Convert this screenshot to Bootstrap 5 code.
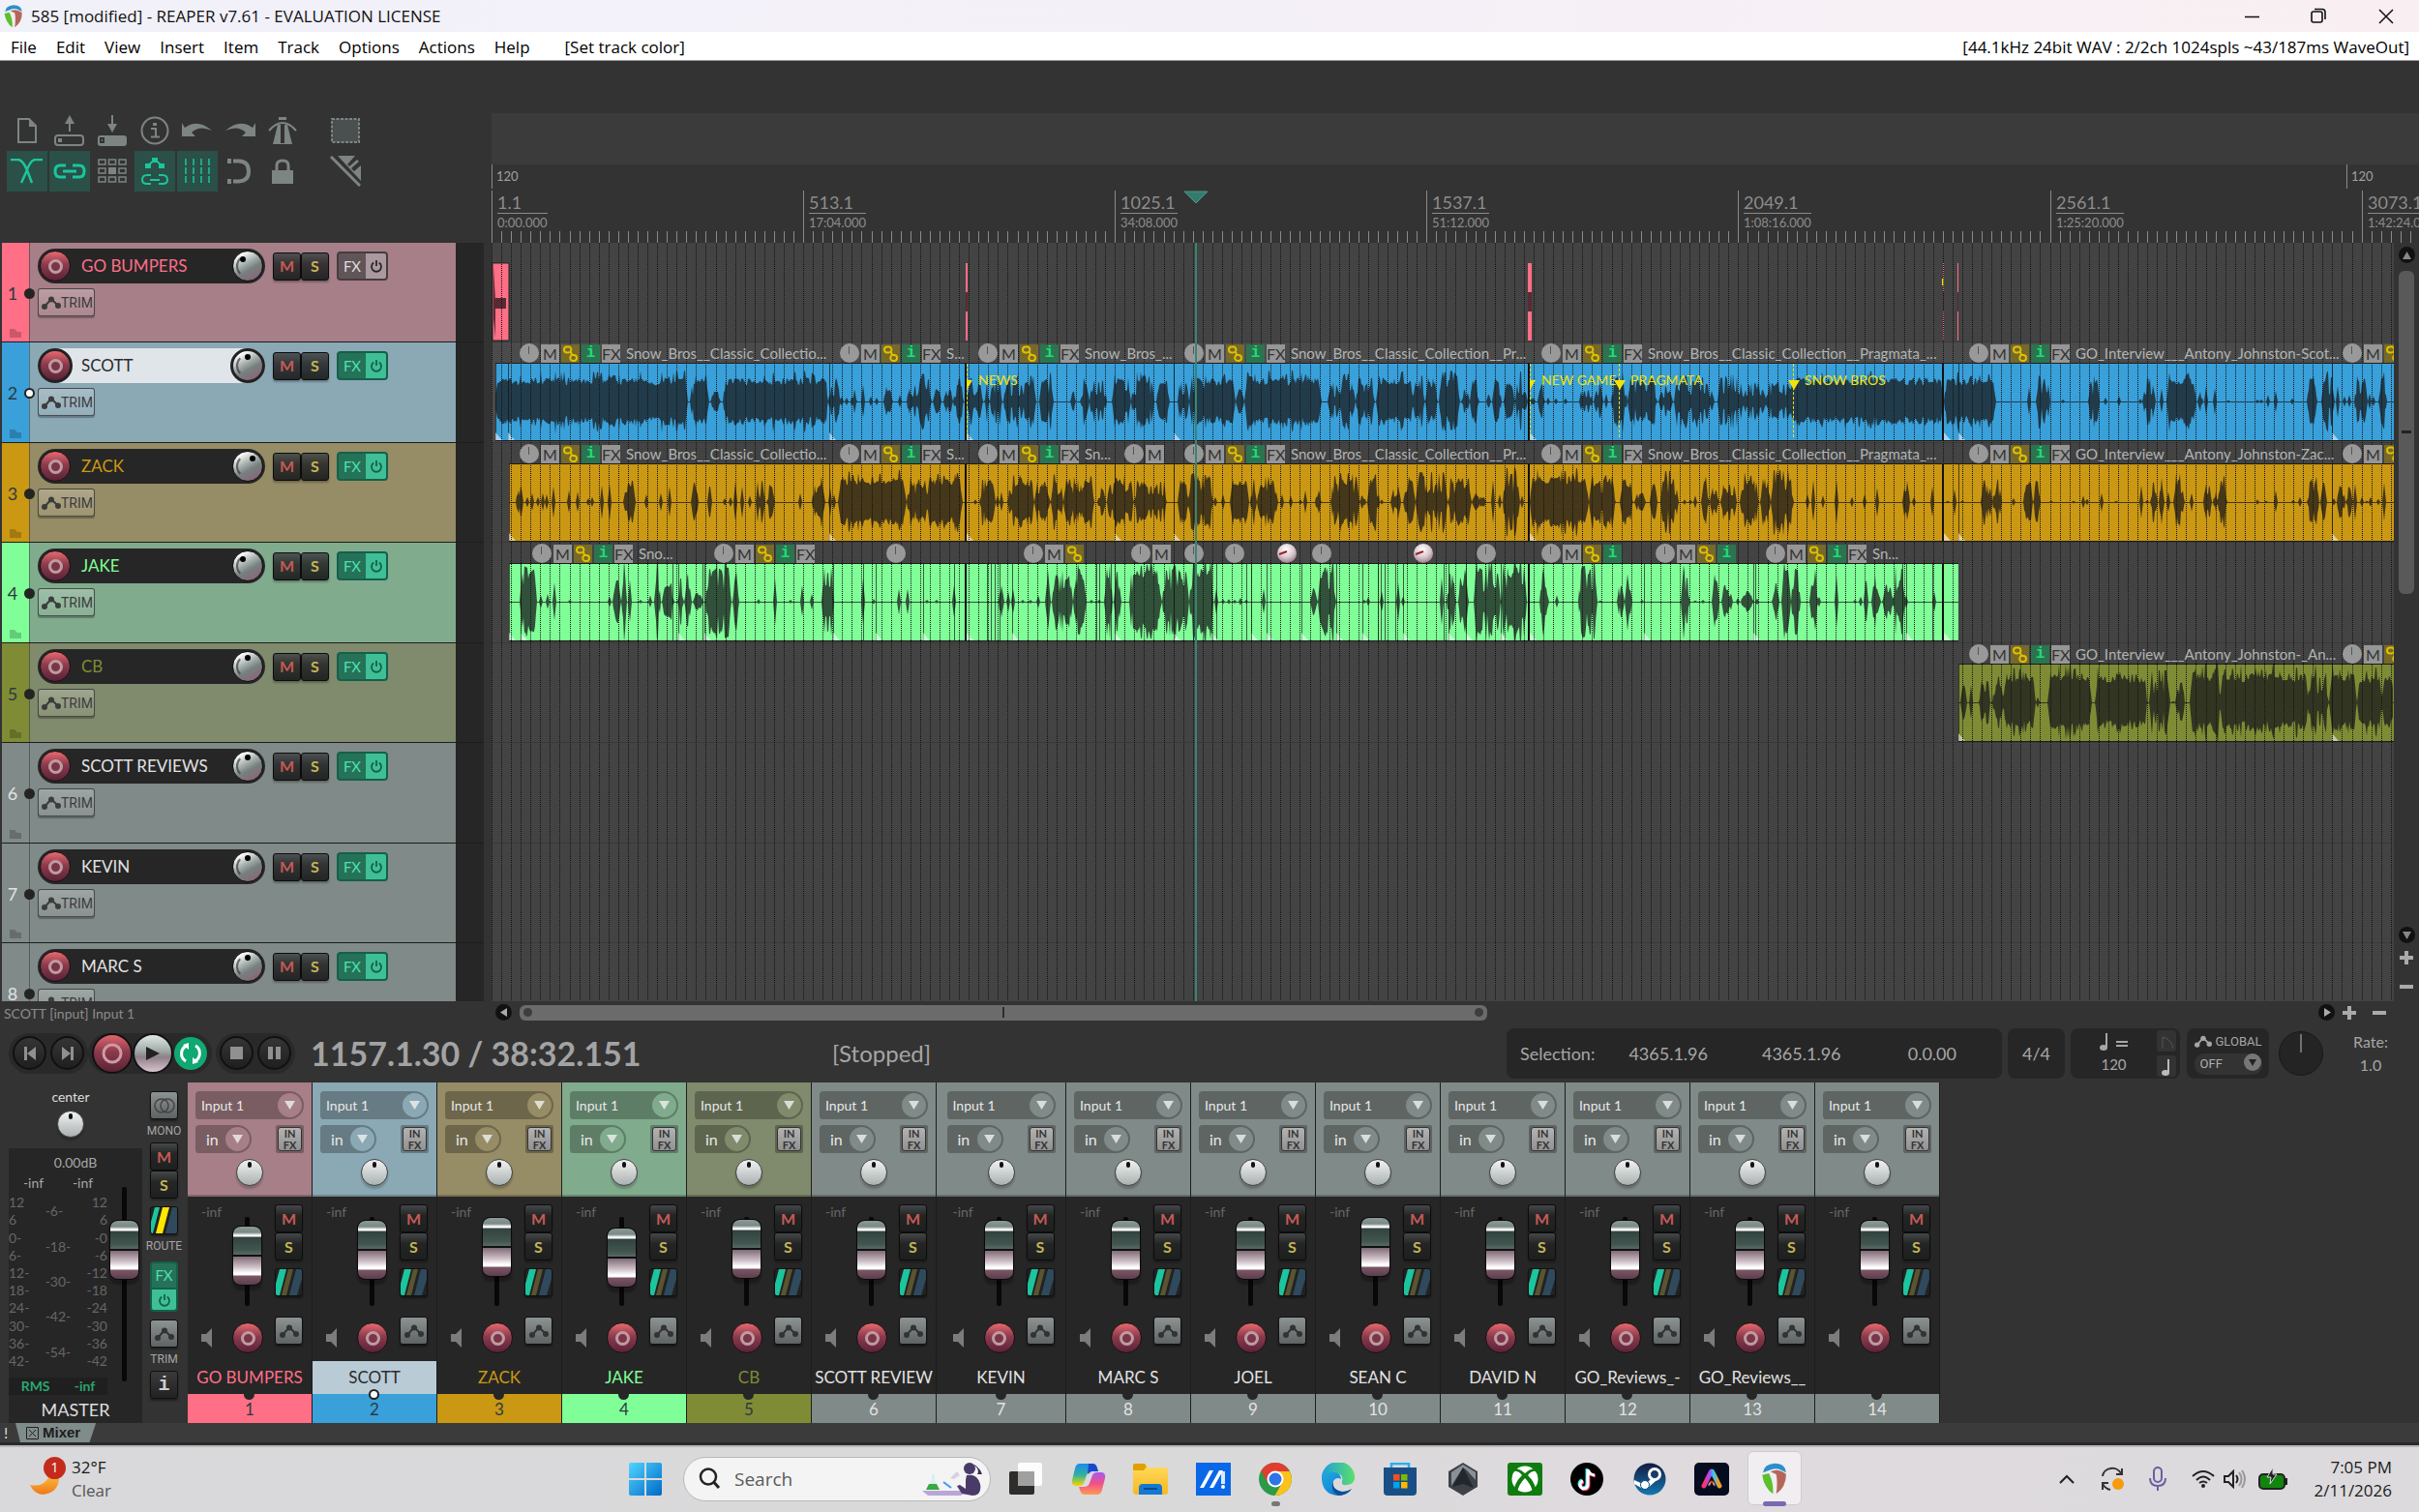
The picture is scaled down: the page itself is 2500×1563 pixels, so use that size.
<!DOCTYPE html>
<html lang="en">
<head>
<meta charset="utf-8">
<meta name="viewport" content="width=device-width, initial-scale=1">
<title>585 [modified] - REAPER v7.61 - EVALUATION LICENSE</title>
<link rel="stylesheet" href="https://cdn.jsdelivr.net/npm/bootstrap@5.3.0/dist/css/bootstrap.min.css">
<style>
:root{--ui:"Open Sans","Noto Sans",sans-serif;--daw:Lato,"Open Sans",sans-serif;--narrow:"Liberation Sans Narrow",Roboto,sans-serif}
html,body{height:100%}
body{background:#333;color:#a6a6a6;font-family:var(--daw);font-size:16px;line-height:20px;overflow:hidden}
svg{display:block;flex:none}
a{color:inherit;text-decoration:none}
.btn{--bs-btn-padding-x:0;--bs-btn-padding-y:0;--bs-btn-border-radius:3px;line-height:1;flex:none}

/* window frame */
.titlebar{height:33px;background:linear-gradient(90deg,#f1f1f9,#f4f0f8 50%,#f9eff2);color:#111;font:17px/34px var(--ui)}
.titlebar svg{color:#111}
.winbtn{width:69px;height:33px}
.menubar{height:30px;background:#fff;border-bottom:1px solid #999;color:#000;font:17px/31px var(--ui);padding-left:1px}
.menubar a{padding:0 10px}

/* tool bar and ruler */
.head{height:188px}
.tcpw{width:508px;flex:none}
.tools{padding:51px 0 0 7px}
.toolrow{gap:2px}
.tool{width:42px;height:42px;color:#7d8583;border-radius:0;display:flex;align-items:center;justify-content:center}
.tool.on{background:#2a5048;color:#1cc59d}
.tool.far{margin-left:21px}
.tool:hover{color:#a0a8a6}
.shade{height:53px;margin-top:54px;background:#3b3b3b}
.tempo{height:27px}
.timeruler{height:54px}
.rmark{position:absolute;top:0;height:100%;border-left:1px solid #8a8a8a;padding-left:5px;white-space:nowrap;color:#8c8c8c}
.rmark b{display:block;font:18px/21px var(--daw);border-bottom:1px solid #8a8a8a;margin-top:2px}
.rmark i{display:block;font:normal 13px/18px var(--daw)}
.tmark{position:absolute;top:0;height:25px;border-left:1px solid #8a8a8a;padding-left:4px;font-size:13px;line-height:25px;color:#a0a0a0}

/* track control panel */
.work{flex:1 1 0;min-height:0;overflow:hidden}
.tcp{padding-left:2px;padding-right:8px}
.trk{height:103px;background:#262626;border-bottom:1px solid #1d1d1d}
.trk:nth-child(even),.lane:nth-child(even){height:104px}
.tnum{width:28px;background:var(--c);color:#2c3a40;font-size:18px;position:relative;flex:none}
.tnum span{position:absolute;left:0;width:22px;text-align:center;top:42px}
.tnum svg{position:absolute;left:8px;bottom:4px;opacity:.2}
.tdot{position:absolute;left:23px;top:47px;width:11px;height:11px;border-radius:50%;background:#242424;z-index:1}
.sel .tdot{background:#fff;border:2px solid #222}
.tbody2{background:var(--p);border-left:1px solid #0005;width:441px;padding:6px 0 0 8px;flex:none}
.pill{width:235px;height:36px;border-radius:18px;background:#262626;padding:2px;color:var(--n)}
.sel .pill{background:#dfe5e9;padding:0;color:#2b2b30}
.sel .pill>.arm,.sel .pill>.pan{width:36px;height:36px;border:3px solid #222}
.tname{font-size:17px;flex:1;padding-left:11px;white-space:nowrap;overflow:hidden}
.sel .tname{padding-left:9px}
.arm{width:32px;height:32px;border-radius:50%;background:linear-gradient(#e8696f,#8b3b4c 45%,#5a2338);border:1px solid #1d1014;display:flex;align-items:center;justify-content:center;padding:0;flex:none}
.arm::after{content:"";width:15px;height:15px;border-radius:50%;border:3px solid #c09aa2;background:#7a3547}
.pan{width:32px;height:32px;border-radius:50%;border:1px solid #111;background:linear-gradient(150deg,#fff 15%,#aab5b2 40%,#75807f 60%,#8c6478 90%);position:relative;padding:0;flex:none}
.pan::before{content:"";position:absolute;inset:3px;border-radius:50%;border:2px solid transparent;border-left-color:#333a}
.pan::after{content:"";position:absolute;width:6px;height:6px;border-radius:50%;background:#000;top:3px;left:12px}
.pan.l::after{left:7px;top:5px}.pan.r::after{left:17px;top:4px}
.ms{width:29px;height:29px;background:linear-gradient(#4b4f50cc,#222a 40%,#1c1e1edd),#2a2c2c88;border:1px solid #0c0c0c;border-radius:3px;font:bold 16px/1 var(--daw);color:#c55a56;box-shadow:0 2px 2px #0004}
.ms.s{color:#c4b456}
.fxb{width:30px;height:30px;border:2px solid #14604a;border-right:0;border-radius:4px 0 0 4px;background:#257258;color:#4fe0b0;font:15px/1 var(--daw)}
.pwr{width:23px;height:30px;border:2px solid #14604a;border-left:0;border-radius:0 4px 4px 0;background:#3fbf96;color:#14604a;display:flex;align-items:center;justify-content:center}
.off .fxb{background:#625558;border-color:#473c3f;color:#ddd}
.off .pwr{background:#aa999e;border-color:#473c3f;color:#2c2527}
.trim{width:59px;height:29px;margin-top:5px;border:1px solid #333c;background:linear-gradient(#ffffff3d,#ffffff12),var(--p);color:#3c3c3c;font:14px/1 var(--narrow);display:flex;align-items:center;padding-left:3px;box-shadow:0 2px 1px #0004}

/* arrange view */
.lane{height:103px;position:relative;background:#434343;border-bottom:1px solid #3a3a3a}
.lane.sel{background:#4b4b4b}
.lane svg.wave{position:absolute;left:0;top:0}
.gridlines{position:absolute;left:0;top:0;pointer-events:none}
.clip{position:absolute;top:1px;height:20px;display:flex;gap:2px;align-items:flex-end;white-space:nowrap;z-index:2;color:#b0b4b4}
.clip i{width:19px;height:19px;flex:none;font:normal 16px/19px var(--daw);text-align:center;background:#969696;color:#333}
.clip i.k{width:20px;height:20px;border-radius:50%;background:linear-gradient(90deg,transparent 9px,#555 9px,#555 10px,transparent 10px) 0 3px/20px 8px no-repeat,#999}
.clip i.k2{border-radius:50%;width:20px;height:20px;background:radial-gradient(circle at 45% 30%,#fff,#d9c9cf 45%,#7a5060)}
.clip i.g{background:#76692a;color:#e0c000}
.clip i.i{background:#2c7450;color:#1fdc77;font:bold 16px/19px "Liberation Mono",monospace}
.clip span{font-size:15px;line-height:20px;padding-left:4px}
.flag{position:absolute;top:22px;height:79px;z-index:2;color:#f2e20a;font-size:14px;line-height:34px;padding-left:12px;white-space:nowrap}
.flag::before{content:"";position:absolute;left:0;top:0;height:76px;border-left:1px dashed #f2e20a}
.flag::after{content:"";position:absolute;left:-5px;top:17px;border:6px solid transparent;border-top:10px solid #f2e20a;border-bottom:0}
.flag.h::after{left:0;border-left-width:0}
.playhead{position:absolute;top:-54px;bottom:0;left:727px;width:2px;background:#3a8474;z-index:3}
.playhead svg{margin-left:-12px}
.vs{width:26px;flex:none}
.vthumb{width:16px;height:334px;border-radius:6px;background:#595959}
.vthumb::after{content:"";display:block;width:10px;height:3px;background:#222;margin:165px auto 0}
.rnd{width:17px;height:17px;border-radius:50%;background:#111;color:#888;display:flex;align-items:center;justify-content:center}
.status{height:27px;color:#8c8c8c;font-size:14px;line-height:26px}
.hend{margin-right:33px}
.hthumb{width:1000px;height:16px;border-radius:6px;background:#6b6b6b}
.hthumb b{width:9px;height:9px;border-radius:50%;background:#3d3d3d}
.hthumb u{width:2px;height:11px;background:#2c2c2c}

/* transport */
.transport{height:57px;padding:0 0 4px 9px}
.tgroup{background:#292929;border-radius:22px;height:42px;padding:0 4px;gap:4px}
.tbtn{width:35px;height:35px;border-radius:50%;background:linear-gradient(#353535,#1f1f1f);border:2px solid #111;color:#909090;display:flex;align-items:center;justify-content:center;padding:0}
.tbtn.rec{width:42px;height:42px;background:linear-gradient(#e0656c,#8b3b4c 45%,#5a2338);color:#cf9aa2}
.tbtn.play{width:42px;height:42px;background:linear-gradient(#dfe8e4,#a5b0ac 40%,#8c8088 60%,#d9c4ce);color:#222}
.tbtn.loop{width:34px;height:34px;background:#10a873;color:#fff;border:0;margin:0 1px}
.bigtime{font-weight:700;font-size:34px;line-height:42px;color:#a3a3a3;margin-left:16px;width:539px}
.tbox{background:#262626;border-radius:8px;height:52px;font-size:18px}
.selbox{width:512px;padding:0 47px 0 14px}
.selbox span+span{margin-left:35px}
.selbox span+span+span{margin-left:56px}
.selbox span:last-child{margin-left:auto}
.sigbox{margin-left:6px;width:59px}
.bpmbox{margin-left:6px;width:113px}
.bpmbox p{font-size:15px;line-height:26px;margin:0}
.tiny{background:#333;width:20px;height:22px}
.autobox{margin-left:7px;width:85px}
.autobox div{font:13px/20px var(--narrow)}
.globalsel{appearance:none;background:#333;border:0;border-radius:10px;height:22px;width:70px;color:#b0b0b0;font:13px/20px var(--narrow);padding:0 6px}
.ratedial{margin-left:10px;width:46px;height:46px;background:#242424;border:1px solid #191919}
.ratetext{margin:0 30px 0 29px;line-height:24px;width:40px;font-size:16px}

/* mixer */
.mixer{height:352px}
.master{width:194px;flex:none}
.mcenter{left:0;width:146px;top:5px;color:#ddd;font-size:14px}
.meter{width:138px;background:#262626;margin:68px 0 0 9px}
.mdb{font-size:14px;line-height:29px}
.mcol{width:102px}
.mscale{height:182px}
.mrms{color:#2aa56f;background:#1f1f1f;font-size:14px;font-weight:bold;line-height:18px}
.mname{color:#ddd;font-size:18px;line-height:30px;width:138px;text-align:center}
.sc{font-size:14px;color:#666;line-height:18px}
.sc span{flex:1;display:flex;align-items:center}
.side{width:29px;margin-left:8px;padding-top:9px;color:#a6a6a6}
.slabel{font:12px/20px var(--narrow);display:block;text-align:center;margin:2px -6px}
.fxv{width:29px;height:29px;background:#257258;border:2px solid #14604a;color:#4fe0b0;font-size:15px;border-radius:4px 4px 0 0}
.pwv{width:29px;height:23px;background:#3fbf96;border:2px solid #14604a;border-top:0;color:#14604a;border-radius:0 0 4px 4px}
.knob{width:28px;height:28px;border-radius:50%;border:1px solid #444;background:linear-gradient(#ffffffe6,#ffffff55),#7e8a88;position:relative;padding:0;box-shadow:0 3px 2px #0003;flex:none}
.knob::after{content:"";position:absolute;left:11px;top:2px;width:4px;height:6px;border-radius:2px;background:#111}
.strip{width:129px;flex:none;border-right:1px solid #0b0b0b88}
.strip.wide{width:134px}
.sin{width:128px;margin:0 auto}
.stop{height:118px;background:var(--p);padding-top:9px;border-bottom:2px solid #0003}
.pick{position:relative;height:29px;background:#0004;border-radius:4px 15px 15px 4px}
.pick select{appearance:none;width:100%;height:29px;border:0;background:none;color:#e8e8e8;font:14px/29px var(--daw);padding:0 6px}
.pick.mon{width:58px}
.pick.mon select{padding-left:11px;font-size:16px}
.pick svg{position:absolute;right:2px;top:2px;pointer-events:none}
.monrow{height:29px;margin-top:6px}
.panrow{margin-top:6px;line-height:28px}
.infx{width:29px;height:29px;background:#0004;padding:2px;border:0;border-radius:2px}
.infx b{display:block;border:1px solid #333;border-radius:3px;background:linear-gradient(#ffffff66,#ffffff22),#808080;height:25px;font:bold 11px/12px var(--daw);color:#333}
.slow{height:170px;background:#262626}
.cola{width:46px;padding:7px 0 0 14px}
.cola svg{margin-top:111px}
.colb{padding-top:21px}
.colb .arm{margin-top:17px}
.colc{padding:8px 0 0 12px}
.colc .rt{margin-bottom:21px}
.fader{position:relative;width:31px;height:92px}
.fader.long{height:201px;margin:11px 0 0 2px}
.fader::before{content:"";position:absolute;left:13px;top:0;bottom:0;width:5px;background:#080808;border-radius:2px}
.cap{position:relative;width:31px;height:62px;border:1px solid #0a0a0a;border-radius:9px/8px;box-shadow:0 5px 2px #0004;background:linear-gradient(#8d9a97 0,#7a8986 6px,#fff 9px,#fff 10px,#33433f 11px,#41554f 24px,#5a6965 29px,#111 29px,#111 31px,#7f6b76 31px,#cfc0c8 42px,#fff 48px,#fff 50px,#7c5566 51px,#5a3f4c 60px)}
.fader input{position:absolute;inset:0;width:100%;height:100%;opacity:0;margin:0}
.sq{width:29px;height:29px;border:1px solid #111;border-radius:3px;background:linear-gradient(#8d9292,#5e6363);color:#333;display:flex;align-items:center;justify-content:center;box-shadow:0 2px 2px #0006}
.sq.dark{background:linear-gradient(#3a3a3a,#222);color:#ccc;font:bold 20px/1 "Liberation Mono",monospace}
.rt{overflow:hidden;background:#222}
.nm{height:34px;line-height:34px;background:#262626;color:var(--n);font-size:17px;text-align:center;white-space:nowrap;overflow:hidden;padding:0 2px}
.sel .nm{background:#b9cbd5;color:#2b2b30}
.no{height:30px;line-height:32px;background:var(--c);color:#2c3a40;font-size:17px;text-align:center;position:relative}
.no::before{content:"";position:absolute;left:50%;top:-5px;width:11px;height:11px;margin-left:-6px;border-radius:50%;background:#262626}
.sel .no::before{background:#fff;border:2px solid #222}
.gray .no,.gray .tnum{color:#e2e2e2}
.tabs2{height:23px;background:#3b3b3b;border-bottom:3px solid #2a2a2a}
.tabs2 b{width:16px;color:#ddd;padding-left:4px;font-weight:400}
.mtab{background:#7f8c8a;color:#1c1c1c;font:bold 15px/20px "Liberation Sans",sans-serif;padding:0 16px 0 11px;clip-path:polygon(0 0,100% 0,92% 100%,6% 100%)}

/* task bar */
.taskbar{height:69px;padding-bottom:2px;border-top:2px solid #b9b9b9;background:linear-gradient(90deg,#d9d9db,#dad9da 50%,#dfdade 70%,#dcdadd);color:#1a1a1a;font:17px/24px var(--ui)}
.weather{width:650px;padding-left:30px}
.wicon{width:44px;font-size:14px}
.wsub{color:#555}
.tapps{width:838px}
.tapps a{flex:1;display:flex;justify-content:center;align-items:center;height:65px;position:relative}
.tapps a.act::before{content:"";position:absolute;left:4px;right:4px;top:4px;height:56px;border-radius:6px;background:#f1eef2;border:1px solid #cfcbd0}
.tapps a.act svg{position:relative}
.tapps a.run::after,.tapps a.act::after{content:"";position:absolute;bottom:4px;width:9px;height:5px;border-radius:3px;background:#777}
.tapps a.act::after{width:24px;background:#7b68b5}
.srch{width:318px;height:46px;border-radius:23px;background:#f4f4f4;border:1px solid #b8b8b8;padding:0 6px 0 15px;margin-left:22px}
.srch input{border:0;background:none;outline:0;width:180px;font:19px/30px var(--ui);color:#555;padding:0 0 0 14px}
.srch input::placeholder{color:#5a5a5a}
.wbadge{position:absolute;left:15px;top:-3px;width:23px;height:23px;border-radius:50%;background:#c42b1c;color:#fff;font-size:14px;line-height:22px;text-align:center}
.tray{padding-right:28px;gap:25px}
</style>
</head>
<body class="d-flex flex-column">

<svg width="0" height="0" class="position-absolute" aria-hidden="true">
 <defs>
  <linearGradient id="gw" x2="1" y2="1"><stop stop-color="#50d5ff"/><stop offset="1" stop-color="#0068c8"/></linearGradient>
  <linearGradient id="gf" y2="1" x2="0"><stop stop-color="#ffdc60"/><stop offset="1" stop-color="#f8b820"/></linearGradient>
  <linearGradient id="ge" x2="1" y2="1"><stop stop-color="#1fa8e0"/><stop offset=".5" stop-color="#1590d8"/><stop offset="1" stop-color="#0c59a4"/></linearGradient>
  <linearGradient id="ge2" x2="1"><stop stop-color="#1c9de0"/><stop offset="1" stop-color="#5be06a"/></linearGradient>
  <linearGradient id="gc1" x2="0" y2="1"><stop stop-color="#1a8cf0"/><stop offset=".5" stop-color="#30b0a0"/><stop offset="1" stop-color="#f5d800"/></linearGradient>
  <linearGradient id="gc2" x2="0" y2="1"><stop stop-color="#a85af0"/><stop offset=".5" stop-color="#f0508a"/><stop offset="1" stop-color="#ff9a50"/></linearGradient>
  <linearGradient id="ga" x2="1" y2="0"><stop stop-color="#ff3070"/><stop offset=".4" stop-color="#a050ff"/><stop offset=".6" stop-color="#30c8f0"/><stop offset="1" stop-color="#ff9a20"/></linearGradient>
  <linearGradient id="ga2" x2="0" y2="1"><stop stop-color="#ff2020"/><stop offset=".5" stop-color="#f0c020"/><stop offset="1" stop-color="#7048ff"/></linearGradient>
  <linearGradient id="gs" x2="0" y2="1"><stop stop-color="#141a40"/><stop offset="1" stop-color="#1478b0"/></linearGradient>
  <linearGradient id="gm" x2="0" y2="1"><stop stop-color="#f8c040"/><stop offset="1" stop-color="#f07818"/></linearGradient>
  <symbol id="reaper" viewBox="0 0 32 40"><path d="M1 16Q-1 4 8 2 16-1 24 2 33 5 31 16 28 32 16 39 4 32 1 16z" fill="#eee"/><path d="M2 12Q3 2 16 1 29 1 30 12L26 10Q18 5 10 9z" fill="#2a90cc"/><path d="M1 15L9 13Q15 24 14 38 3 30 1 15z" fill="#5cbf2c"/><path d="M11 11Q20 6 30 14 30 30 18 38 20 24 18 14z" fill="#b5665a"/></symbol>
  <symbol id="pw" viewBox="0 0 14 14"><path d="M4.2 3.6A5 5 0 1 0 9.8 3.6M7 1V7" fill="none" stroke="currentColor" stroke-width="1.8"/></symbol>
  <symbol id="env" viewBox="0 0 20 14"><path d="M3 11L10 3 17 10" fill="none" stroke="currentColor" stroke-width="2"/><circle cx="3" cy="11" r="3" fill="currentColor"/><circle cx="10" cy="3.5" r="3" fill="currentColor"/><circle cx="17" cy="10" r="3" fill="currentColor"/></symbol>
  <symbol id="fold" viewBox="0 0 12 9"><path d="M0 0H5L8 3H12V9H0z"/></symbol>
  <symbol id="spk" viewBox="0 0 12 20"><path d="M0 6H5L11 0V20L5 14H0z" fill="#7c7c7c"/></symbol>
  <symbol id="dd" viewBox="0 0 25 25"><circle cx="12.500" cy="12.500" r="12.500" fill="var(--p)"/><path d="M7 8H18L12.500 17z" fill="#f0f0f0cc"/></symbol>
  <symbol id="chain" viewBox="0 0 19 19"><path d="M8 8.500H6A3 3 0 0 1 6 2.500H8A3 3 0 0 1 9 8Q12 9 10 12M11 11H13A3 3 0 0 1 13 17H12A3 3 0 0 1 10 12" fill="none" stroke="currentColor" stroke-width="2"/></symbol>
 </defs>
</svg>

<header class="titlebar d-flex align-items-center">
 <svg width="24" height="26" class="ms-0 ps-1"><use href="#reaper"/></svg>
 <span class="ps-2 flex-grow-1">585 [modified] - REAPER v7.61 - EVALUATION LICENSE</span>
 <button class="btn winbtn rounded-0" aria-label="Minimize"><svg class="mx-auto" width="16" height="16"><path d="M0 8.500H15" stroke="currentColor" stroke-width="1.500"/></svg></button>
 <button class="btn winbtn rounded-0" aria-label="Restore"><svg class="mx-auto" width="17" height="17" fill="none" stroke="currentColor" stroke-width="1.600"><rect x="1" y="4" width="11" height="11" rx="2"/><path d="M4 1.500H12Q15 1.500 15 4.500V12"/></svg></button>
 <button class="btn winbtn rounded-0" aria-label="Close"><svg class="mx-auto" width="16" height="16"><path d="M1 1L15 15M15 1L1 15" stroke="currentColor" stroke-width="1.500"/></svg></button>
</header>

<nav class="menubar d-flex" aria-label="Main menu">
 <a href="#">File</a><a href="#">Edit</a><a href="#">View</a><a href="#">Insert</a><a href="#">Item</a><a href="#">Track</a><a href="#">Options</a><a href="#">Actions</a><a href="#">Help</a><a href="#" class="ms-3">[Set track color]</a>
 <a href="#" class="ms-auto">[44.1kHz 24bit WAV : 2/2ch 1024spls ~43/187ms WaveOut]</a>
</nav>

<section class="head d-flex flex-shrink-0">
 <div class="tcpw tools">
  <div class="d-flex toolrow" id="tools1"></div>
  <div class="d-flex toolrow" id="tools2"></div>
 </div>
 <div class="flex-grow-1">
  <div class="shade"></div>
  <div class="tempo position-relative overflow-hidden" id="tempo"></div>
  <div class="timeruler position-relative overflow-hidden" id="ruler"></div>
 </div>
</section>

<main class="work d-flex">
 <div class="tcp tcpw" id="tcp"></div>
 <div class="flex-grow-1 position-relative">
  <div class="overflow-hidden h-100 position-relative" id="lanes"></div>
  <div class="playhead"></div>
 </div>
 <div class="vs d-flex flex-column align-items-center">
  <button class="btn rnd mt-1 rounded-circle" aria-label="Scroll up"><svg width="9" height="8"><path d="M0 8L4.500 0 9 8z" fill="currentColor"/></svg></button>
  <div class="vthumb mt-2"></div>
  <button class="btn rnd mt-auto rounded-circle" aria-label="Scroll down"><svg width="9" height="8"><path d="M0 0L4.500 8 9 0z" fill="currentColor"/></svg></button>
  <button class="btn mt-2 border-0" aria-label="Zoom in vertically"><svg width="14" height="14"><path d="M5 0H9V5H14V9H9V14H5V9H0V5H5z" fill="#aaa"/></svg></button>
  <button class="btn mt-3 mb-2 border-0" aria-label="Zoom out vertically"><svg width="14" height="14"><path d="M0 5H14V9H0z" fill="#aaa"/></svg></button>
 </div>
</main>

<div class="status d-flex flex-shrink-0">
 <div class="tcpw ps-1">SCOTT [input] Input 1</div>
 <div class="d-flex align-items-center flex-grow-1 pb-1 ps-1">
  <button class="btn rnd rounded-circle" aria-label="Scroll left"><svg width="8" height="9"><path d="M7 0L0 4.500 7 9z" fill="#aaa"/></svg></button>
  <div class="hthumb ms-2 d-flex justify-content-between align-items-center px-1"><b></b><u></u><b></b></div>
  <button class="btn rnd rounded-circle ms-auto" aria-label="Scroll right"><svg width="8" height="9"><path d="M1 0L8 4.500 1 9z" fill="#aaa"/></svg></button>
  <button class="btn border-0 ms-2" aria-label="Zoom in"><svg width="15" height="14"><path d="M5 0H9V5H14V9H9V14H5V9H0V5H5z" fill="#aaa"/></svg></button>
  <button class="btn border-0 ms-3 hend" aria-label="Zoom out"><svg width="15" height="14"><path d="M0 5H14V9H0z" fill="#aaa"/></svg></button>
 </div>
</div>

<section class="transport d-flex align-items-center flex-shrink-0">
 <div class="tgroup d-flex align-items-center">
  <button class="btn tbtn" aria-label="Go to start"><svg width="14" height="14" fill="currentColor"><path d="M1 0H4V14H1zM13 0V14L4 7z"/></svg></button>
  <button class="btn tbtn" aria-label="Go to end"><svg width="14" height="14" fill="currentColor"><path d="M10 0H13V14H10zM1 0V14L10 7z"/></svg></button>
 </div>
 <div class="tgroup d-flex align-items-center px-1 gap-0">
  <button class="btn tbtn rec" aria-label="Record"><svg width="22" height="22"><circle cx="11" cy="11" r="9" fill="none" stroke="currentColor" stroke-width="3"/></svg></button>
  <button class="btn tbtn play" aria-label="Play"><svg width="16" height="16"><path d="M1 1L15 8 1 15z" fill="currentColor"/></svg></button>
  <button class="btn tbtn loop" aria-label="Repeat"><svg width="24" height="24" fill="none" stroke="currentColor" stroke-width="3"><path d="M8 4A9 9 0 0 0 7 20M16 20A9 9 0 0 0 17 4"/><path d="M10 1V8L4 3zM14 23V16L20 21z" fill="currentColor" stroke="none"/></svg></button>
 </div>
 <div class="tgroup d-flex align-items-center ms-1">
  <button class="btn tbtn" aria-label="Stop"><svg width="13" height="13"><path d="M0 0H13V13H0z" fill="currentColor"/></svg></button>
  <button class="btn tbtn" aria-label="Pause"><svg width="13" height="13"><path d="M0 0H5V13H0zM8 0H13V13H8z" fill="currentColor"/></svg></button>
 </div>
 <div class="bigtime">1157.1.30 / 38:32.151</div>
 <div class="flex-grow-1 fs-4">[Stopped]</div>
 <div class="tbox selbox d-flex align-items-center"><span>Selection:</span><span>4365.1.96</span><span>4365.1.96</span><span>0.0.00</span></div>
 <div class="tbox sigbox d-flex align-items-center justify-content-center">4/4</div>
 <div class="tbox bpmbox d-flex">
  <div class="flex-grow-1 text-center pt-1"><svg class="mx-auto" width="32" height="20" fill="#a6a6a6"><ellipse cx="5" cy="16" rx="4" ry="3"/><path d="M7 1H9V16H7zM18 9H30V11H18zM18 13H30V15H18z"/></svg><p>120</p></div>
  <div class="d-flex flex-column gap-1 justify-content-center me-1"><button class="btn tiny" aria-label="Tempo envelope"><svg width="20" height="22"><path d="M5 18V6Q14 8 16 18" stroke="#555" fill="none"/></svg></button><button class="btn tiny" aria-label="Note value"><svg width="20" height="22" fill="#bbb"><ellipse cx="8" cy="17" rx="4" ry="3"/><path d="M10 3H12V17H10z"/></svg></button></div>
 </div>
 <div class="tbox autobox text-center">
  <div class="d-flex align-items-center justify-content-center gap-1 pt-1"><svg width="18" height="13"><use href="#env"/></svg>GLOBAL</div>
  <label class="position-relative d-inline-block"><select class="globalsel" aria-label="Global automation"><option>OFF</option></select><svg class="position-absolute end-0 top-0" width="20" height="20"><circle cx="10" cy="11" r="9" fill="#777"/><path d="M6 8H14L10 15z" fill="#222"/></svg></label>
 </div>
 <button class="btn rounded-circle ratedial" aria-label="Rate"><svg width="44" height="44"><path d="M22 2V21" stroke="#bbb" stroke-width="1"/></svg></button>
 <div class="text-center ratetext">Rate:<br>1.0</div>
</section>

<section class="mixer d-flex flex-shrink-0">
 <div class="master d-flex position-relative">
  <div class="position-absolute text-center mcenter">center<div><button class="knob mt-1" aria-label="Master pan"></button></div></div>
  <div class="meter d-flex flex-column">
   <div class="text-center mdb">0.00dB</div>
   <div class="d-flex flex-grow-1">
    <div class="mcol d-flex flex-column">
     <div class="d-flex justify-content-around lh-1 pb-1 mdb"><span class="lh-1">-inf</span><span class="lh-1">-inf</span></div>
     <div class="d-flex justify-content-between mscale">
      <div class="sc d-flex flex-column" id="s1"></div><div class="sc d-flex flex-column" id="s2"></div><div class="sc d-flex flex-column" id="s3"></div></div>
     <div class="d-flex justify-content-around mt-2 mrms"><span>RMS</span><span>-inf</span></div>
     <div class="mname">MASTER</div>
    </div>
    <div class="fader long" id="mf"></div>
   </div>
  </div>
  <div class="side">
   <button class="btn sq" aria-label="Mono"><svg width="22" height="18" fill="none" stroke="#444" stroke-width="1.500"><circle cx="8" cy="9" r="7"/><circle cx="14" cy="9" r="7"/></svg></button>
   <span class="slabel">MONO</span>
   <button class="btn ms d-block" aria-label="Mute master">M</button><button class="btn ms s d-block" aria-label="Solo master">S</button>
   <button class="btn sq rt mt-2" aria-label="Routing"><svg width="27" height="27"><path d="M0 27V15L4 0H9L2 27z" fill="#1cc59d"/><path d="M5 27L12 0H19L12 27z" fill="#ffe600"/><path d="M15 27L22 0H27V27z" fill="#2f4a5c"/></svg></button>
   <span class="slabel">ROUTE</span>
   <div class="pt-1 pb-2"><button class="btn fxv d-block">FX</button><button class="btn pwv d-block" aria-label="Bypass FX"><svg class="mx-auto" width="14" height="14"><use href="#pw"/></svg></button></div>
   <button class="btn sq" aria-label="Envelopes"><svg width="20" height="14"><use href="#env"/></svg></button>
   <span class="slabel">TRIM</span>
   <button class="btn sq dark" aria-label="Master info">i</button>
  </div>
 </div>
 <div class="d-flex" id="strips"></div>
</section>

<div class="tabs2 d-flex flex-shrink-0"><b>!</b>
 <a href="#" class="mtab d-flex align-items-center gap-1"><svg width="13" height="13" fill="none" stroke="#222"><path d="M.5.5H12.500V12.500H.5zM3 3L10 10M10 3L3 10"/></svg>Mixer</a></div>

<footer class="taskbar d-flex align-items-center flex-shrink-0">
 <a href="#" class="d-flex align-items-center weather">
  <span class="position-relative wicon"><svg width="34" height="40"><path d="M31 12Q31 28 14 30 5 29 1 20 16 23 21 10 28 8 31 12z" fill="url(#gm)" transform="translate(0 6)"/></svg><span class="wbadge">1</span></span>
  <span>32°F<br><span class="wsub">Clear</span></span>
 </a>
 <a href="#" aria-label="Start"><svg width="34" height="34" fill="url(#gw)"><path d="M0 2Q0 0 2 0H16V16H0zM18 0H32Q34 0 34 2V16H18zM0 18H16V34H2Q0 34 0 32zM18 18H34V32Q34 34 32 34H18z"/></svg></a>
 <label class="srch d-flex align-items-center"><svg width="23" height="23" fill="none" stroke="#222" stroke-width="2.500"><circle cx="10" cy="9.500" r="8"/><path d="M16 15.500L21 21" stroke-width="3"/></svg><input type="search" placeholder="Search" aria-label="Search">
  <svg class="ms-auto" width="64" height="38"><path d="M0 31H46L40 36H6z" fill="#b9a6d8"/><path d="M10 14V20L4 30H18L13 20V14z" fill="#d8f0ee"/><path d="M7 24L4 30H18L15 24z" fill="#3aa845"/><path d="M22 22L30 28" stroke="#38a0e8" stroke-width="2"/><path d="M29 18L36 11 39 15 33 19z" fill="#d8d0e0"/><circle cx="49" cy="8" r="6" fill="#4a3a68"/><path d="M46 15Q57 13 60 24 62 36 52 36L41 34 36 26 39 25 45 29 45 20z" fill="#4a3a68"/><path d="M54 5Q60 9 57 14L62 14Q60 8 54 4z" fill="#3a2c58"/></svg></label>
 <nav class="tapps d-flex ms-1" aria-label="Pinned apps">
  <a href="#" aria-label="Task view"><svg width="36" height="34"><rect x="1" y="9" width="26" height="24" rx="2" fill="#2e2d2b"/><rect x="10" y="0" width="25" height="24" rx="2" fill="#fff" opacity=".9"/><path d="M10 9H27V24H10z" fill="#a0a0a0"/></svg></a>
  <a href="#" aria-label="Copilot"><svg width="36" height="34"><path d="M9 1H22Q26 1 27 6L28 9H21Q17 9 16 13L13 21Q12 24 8 24H5Q0 24 1 18L4 6Q5 1 9 1z" fill="url(#gc1)"/><path d="M27 33H14Q10 33 9 28L8 25H13Q18 25 19 21L22 13Q23 10 27 10H31Q36 10 35 16L32 28Q31 33 27 33z" fill="url(#gc2)"/><path d="M18 1H22Q26 1 27 6L28 9H21L17 12z" fill="#1848d0"/></svg></a>
  <a href="#" aria-label="File Explorer"><svg width="36" height="34"><path d="M0 3Q0 1 2 1H12L15 5H33Q36 5 36 8V30Q36 33 33 33H3Q0 33 0 30z" fill="url(#gf)"/><path d="M0 3Q0 1 2 1H12L14 4 11 8H0z" fill="#e0a000"/><path d="M6 33V26Q6 22 10 22H26Q30 22 30 26V33z" fill="#1478d0"/><path d="M11 27H25" stroke="#0a4a90" stroke-width="2"/></svg></a>
  <a href="#" aria-label="MyASUS"><svg width="36" height="34"><rect width="36" height="34" fill="#0a68e8"/><path d="M4 26L14 8H18L8 26zM14 26L24 8H28L18 26z" fill="#fff"/><path d="M26 9H30V22H26z" fill="#fff" opacity=".85"/><circle cx="28" cy="25" r="2" fill="#fff"/></svg></a>
  <a href="#" class="run" aria-label="Chrome"><svg width="34" height="34" viewBox="0 0 34 34"><circle cx="17" cy="17" r="17" fill="#2d9a48"/><path d="M2.300 8.500A17 17 0 0 1 31.700 8.500L17 9.500 9.600 21z" fill="#e03c31"/><path d="M17 9H31.900A17 17 0 0 1 16.500 34L24 21z" fill="#fcc21b"/><circle cx="17" cy="17" r="8.500" fill="#fff"/><circle cx="17" cy="17" r="6.500" fill="#2f74e8"/></svg></a>
  <a href="#" aria-label="Edge"><svg width="36" height="34"><path d="M1 17A17 16.500 0 0 1 35 14Q36 22 27 23 21 24 22 19 24 12 16 11 5 11 1 19z" fill="url(#ge2)"/><path d="M1 17Q4 9 14 10 21 11 21 17 16 14 13 19 11 28 22 30 28 30 32 27 27 34 18 34 2 33 1 17z" fill="url(#ge)"/><path d="M13 19Q11 28 22 30 28 30 32 27 27 34 18 34 9 29 13 19z" fill="#104f98"/></svg></a>
  <a href="#" aria-label="Microsoft Store"><svg width="34" height="34"><path d="M8 6V1H26V6" fill="none" stroke="#22b0f0" stroke-width="2.500"/><path d="M0 5H34V30Q34 34 30 34H4Q0 34 0 30z" fill="#1a4f86"/><path d="M10 12H16.500V18.500H10z" fill="#f25022"/><path d="M18 12H24.500V18.500H18z" fill="#7fba00"/><path d="M10 20H16.500V26.500H10z" fill="#00a4ef"/><path d="M18 20H24.500V26.500H18z" fill="#ffb900"/></svg></a>
  <a href="#" aria-label="Armoury Crate"><svg width="32" height="34"><path d="M16 0L31 9V25L16 34 1 25V9z" fill="#3c4248"/><path d="M16 2L29 10V18L20 8 16 5 4 24V10z" fill="#8a9098"/><path d="M16 5L27 26 16 22 5 25z" fill="#23272c"/></svg></a>
  <a href="#" aria-label="Xbox"><svg width="36" height="34"><rect width="36" height="34" rx="3" fill="#107c10"/><circle cx="18" cy="17" r="13.500" fill="#fff"/><path d="M9 6Q14 7 18 11 22 7 27 6L30 9Q25 8 21 13 28 20 29 27L26 30Q24 22 18 16 12 22 10 30L7 27Q8 20 15 13 11 8 6 9z" fill="#107c10"/></svg></a>
  <a href="#" aria-label="TikTok"><svg width="34" height="34"><circle cx="17" cy="17" r="17" fill="#000"/><path d="M17 6V22A4 4 0 1 1 12 18" fill="none" stroke="#25f4ee" stroke-width="3"/><path d="M19 8V24A4 4 0 1 1 14 20M19 8Q20 13 26 14" fill="none" stroke="#fe2c55" stroke-width="3"/><path d="M18 7V23A4 4 0 1 1 13 19M18 7Q19 12 25 13" fill="none" stroke="#fff" stroke-width="3"/></svg></a>
  <a href="#" aria-label="Steam"><svg width="34" height="34"><circle cx="17" cy="17" r="16.500" fill="url(#gs)"/><path d="M1 18L12 23 18 17 27 15 22 20 14 27 8 26 1 22z" fill="#fff"/><circle cx="22" cy="12" r="7" fill="#fff"/><circle cx="22" cy="12" r="4.500" fill="#1a3a68" stroke="#fff"/><circle cx="12" cy="23" r="4.500" fill="#fff" stroke="#184a78"/></svg></a>
  <a href="#" aria-label="Adobe Express"><svg width="36" height="34"><rect width="36" height="34" rx="5" fill="#050c20"/><path d="M10 24L17 10Q18 8 19 10L26 24" fill="none" stroke="url(#ga)" stroke-width="5" stroke-linecap="round" stroke-linejoin="round"/><path d="M15 24Q18 15 21 24" fill="none" stroke="url(#ga2)" stroke-width="2"/></svg></a>
  <a href="#" class="act" aria-label="REAPER"><svg width="32" height="34"><use href="#reaper"/></svg></a>
 </nav>
 <div class="d-flex align-items-center ms-auto tray">
  <svg width="18" height="12" fill="none" stroke="#222" stroke-width="2"><path d="M2 10L9 3 16 10"/></svg>
  <svg width="26" height="26" fill="none" stroke="#333" stroke-width="2"><path d="M3 10A10 9 0 0 1 22 7M23 2V8H17M3 24V17H9M3 18Q6 23 11 24"/><circle cx="19" cy="18" r="6" fill="#f79a0c" stroke="none"/></svg>
  <svg width="18" height="26" fill="none" stroke="#6a5fa0" stroke-width="2"><rect x="5" y="1" width="8" height="15" rx="4"/><path d="M1 12Q1 20 9 20 17 20 17 12M9 20V25"/></svg>
  <span class="d-flex align-items-center gap-2">
  <svg width="26" height="20" fill="none" stroke="#222" stroke-width="2"><path d="M2 7Q13-3 24 7M6 11Q13 4 20 11M9 14Q13 11 17 14"/><circle cx="13" cy="17" r="2" fill="#222" stroke="none"/></svg>
  <svg width="24" height="20" fill="none" stroke="#222" stroke-width="2"><path d="M1 7H5L10 2V18L5 13H1zM13 6Q16 10 13 14"/><path d="M16 3Q21 10 16 17M19 1Q25 10 19 19" stroke="#999"/></svg>
  <svg class="ms-1" width="32" height="24"><rect x="1" y="7" width="26" height="15" rx="4" fill="#12850f" stroke="#222" stroke-width="2"/><path d="M28 11H30V18H28z" fill="#222"/><path d="M15 0L9 10H13L12 17 19 7H15z" fill="#222" stroke="#dcdadd"/></svg></span>
  <div class="text-end">7:05 PM<br>2/11/2026</div>
 </div>
</footer>

<script src="https://cdn.jsdelivr.net/npm/bootstrap@5.3.0/dist/js/bootstrap.bundle.min.js"></script>
<script>
const $ = id => document.getElementById(id);
const gray = ['#808a88', '#808a88', '#e2e2e2'];
const pal = [['#ff6f86','#a67f88','#ff6f86'],['#39a0da','#8ba8b5','#2b2b30'],['#cb9813','#968c65','#cb9813'],['#80ff98','#80ab8d','#80ff98'],['#7f8c35','#808a6c','#7f8c35']];
const names = ['GO BUMPERS','SCOTT','ZACK','JAKE','CB','SCOTT REVIEWS','KEVIN','MARC S','JOEL','SEAN C','DAVID N','GO_Reviews_-','GO_Reviews__',''];
const pans = ['l','','r','l','','','',''];
const vars = i => { const p = pal[i] || gray; return `--c:${p[0]};--p:${p[1]};--n:${p[2]}`; };

/* tool bar icons */
const ic = (w, h, d) => `<svg width="${w}" height="${h}" fill="none" stroke="currentColor" stroke-width="2">${d}</svg>`;
const F = 'fill="currentColor" stroke="none"';
const t1 = [
 ['New project', ic(20,26,`<path d="M1 1H12L19 8V25H1z"/><path d="M12 1L19 9H12z" ${F}/>`)],
 ['Open project', ic(32,32,`<rect x="1" y="21" width="29" height="10" rx="3"/><path d="M4 24H8V28H4zM16 0L21 9H11z" ${F}/><path d="M16 8V17"/>`)],
 ['Save project', ic(32,32,`<rect x="1" y="21" width="30" height="11" rx="3" ${F}/><path d="M4 24V28H7V24z" stroke="#333"/><path d="M16 18L21 9H11z" ${F}/><path d="M16 0V10"/>`)],
 ['Project settings', ic(30,30,`<circle cx="15" cy="15" r="13.500"/><path d="M11 13H16V21M11 21.500H20"/><path d="M13 7H17V10H13z" ${F}/>`)],
 ['Undo', ic(32,18,`<path d="M0 1L3 6Q16-4 31 9 18 3 10 11L14 15H0z" ${F}/>`)],
 ['Redo', ic(32,18,`<path d="M32 1L29 6Q16-4 1 9 14 3 22 11L18 15H32z" ${F}/>`)],
 ['Metronome', ic(30,30,`<path d="M11 1H19V4H11z" ${F}/><path d="M1 15Q15-1 29 15"/><path d="M10 9L5 29H25L20 9H17V28H13V9z" ${F}/>`)],
 ['Marquee', ic(32,26,`<rect x="2" y="1" width="28" height="24" fill="#4a4f4f" stroke-dasharray="3 1.500"/>`)]];
const t2 = [
 ['Auto-crossfade', ic(34,26,'<path d="M0 1H8Q13 2 17 12L22 25M33 1H25Q20 2 16 14L11 25" stroke-width="2.500"/>'),1],
 ['Item grouping', ic(34,16,'<path d="M13 2H7Q2 2 2 8 2 14 7 14H13M20 2H27Q32 2 32 8 32 14 27 14H20M10 8H24" stroke-width="3"/>'),1],
 ['Ripple edit', ic(30,26,'<path d="M1 1H8V6H1zM11.500 1H18.500V6H11.500zM22 1H29V6H22zM1 10H8V15H1zM22 10H29V15H22zM1 19H8V24H1zM11.500 19H18.500V24H11.500zM22 19H29V24H22z" stroke-width="1.500"/><path d="M11 9H19V16H11z" '+F+'/>'),0],
 ['Envelopes move with items', ic(28,30,`<path d="M7 9L14 3 21 9" /><path d="M4 7H10V12H4zM11 1H17V6H11zM18 7H24V12H18z" ${F}/><path d="M10 19H6Q1 19 1 24 1 28 6 28H10M18 19H22Q27 19 27 24 27 28 22 28H18M9 24H19"/>`),1],
 ['Grid lines', ic(28,26,'<path d="M2 0V26M10 0V26M18 0V26M26 0V26" stroke-dasharray="7 2" stroke-width="1.500"/>'),1],
 ['Snap', ic(26,26,`<path d="M6 2.500H12Q22 3 22 13 22 23 12 23.500H6" stroke-width="4"/><path d="M0 0H4V5H0zM0 21H4V26H0z" ${F}/>`),0],
 ['Locking', ic(22,26,`<path d="M5 12V7Q5 2 11 2 17 2 17 7V12" stroke-width="3"/><path d="M0 12H22V26H0z" ${F}/>`),0],
 ['Razor edit', ic(32,32,`<path d="M8 0L32 26V10L25 16 22 13 30 6 28 4 20 11 18 9 26 0z" ${F}/><path d="M1 1L31 31" stroke-width="3"/>`),0]];
const tb = (a) => a.map((t, i) => `<button class="btn tool border-0 ${t[2] ? 'on' : ''} ${i == 7 ? 'far' : ''}" aria-label="${t[0]}">${t[1]}</button>`).join('');
$('tools1').innerHTML = tb(t1); $('tools2').innerHTML = tb(t2);

/* ruler: 512 bars take 322 px */
const W = 1966, step = 322.1 / 32;
$('tempo').innerHTML = [0, 1917].map(x => `<div class="tmark" style="left:${x}px">120</div>`).join('');
let ticks = '';
for (let k = 1; k * step < 1990; k++) if (k % 32) ticks += `M${Math.round(k * step) + .5} 42V54`;
$('ruler').innerHTML = `<svg width="1992" height="54"><path d="${ticks}" stroke="#8a8a8a"/><path d="M716 1H740L728 13z" fill="#357a6c" stroke="#4a9a88"/></svg>` +
 [['1.1','0:00.000'],['513.1','17:04.000'],['1025.1','34:08.000'],['1537.1','51:12.000'],['2049.1','1:08:16.000'],['2561.1','1:25:20.000'],['3073.1','1:42:24.000']]
 .map((m, i) => `<div class="rmark" style="left:${Math.round(i * 322.1)}px"><b>${m[0]}</b><i>${m[1]}</i></div>`).join('');

/* track panel */
$('tcp').innerHTML = names.slice(0, 8).map((n, i) => `
<div class="trk d-flex ${i == 1 ? 'sel' : ''} ${i == 0 ? 'off' : ''} ${i > 4 ? 'gray' : ''}" style="${vars(i)}">
 <div class="tnum"><span>${i + 1}</span><div class="tdot"></div><svg width="12" height="9"><use href="#fold"/></svg></div>
 <div class="tbody2">
  <div class="d-flex align-items-center">
   <div class="pill d-flex align-items-center"><button class="arm" aria-label="Record arm ${n}"></button><span class="tname">${n}</span><button class="pan ${pans[i]}" aria-label="Volume ${n}"></button></div>
   <button class="btn ms ms-2" aria-label="Mute ${n}">M</button><button class="btn ms s" aria-label="Solo ${n}">S</button>
   <button class="btn fxb ms-2">FX</button><button class="btn pwr" aria-label="Bypass FX ${n}"><svg width="14" height="14"><use href="#pw"/></svg></button>
  </div>
  <button class="btn trim"><svg width="20" height="14"><use href="#env"/></svg>TRIM</button>
 </div>
</div>`).join('');

/* clips: each token is start-end:level of a burst of sound, "d" marks an unbroken one */
let seed = 7; const rnd = () => (seed = (seed * 16807) % 2147483647) / 2147483647;
const wav = {
1:'512-710:28d 714-732:24 735-744:9 748-855:28d 857-868:22 870:8 875:6 880-885:14 892:26 900:8 906:6 914-922:16 930:10 938-948:20 949-962:26 965-972:16 976-984:14 986-995:22 1000-1015:22 1018-1022:20 1024-1035:28 1038-1070:24 1075-1088:28 1107-1111:14 1117-1125:22 1127-1143:24 1150-1168:26 1170-1192:28 1196-1208:22 1218-1228:24 1230-1245:26 1244-1276:28d 1278-1285:14 1287-1365:28d 1373-1384:18 1384-1400:26 1402-1420:22 1423-1460:28d 1461-1472:24 1474-1485:22 1488-1508:32 1511-1518:14 1520-1528:24 1537-1540:10 1543-1551:24 1555-1565:20 1567-1578:28 1582-1586:8 1590-1596:16 1600:6 1608:5 1618:5 1633-1645:16 1648-1656:16 1660:12 1666-1681:28 1683-1712:25 1715-1728:14 1731-1766:28 1767-1771:16 1776-1801:26 1802-1825:18 1826-1851:22 1850-2008:28d 2010-2062:27d 2097:22 2105-2118:24 2132:3 2159-2169:24 2176:6 2190:8 2212:4 2215-2227:22 2234:20 2240-2269:27d 2272-2276:12 2280:24 2289:20 2303:2 2333:3 2337:3 2344:10 2352:16 2369:5 2385-2394:24 2400-2412:28 2416:24 2423:8 2428:10 2434-2446:24 2449:12 2453:8 2459-2466:28',
2:'522-525:24 534-540:26 545:8 550:14 556:8 561:14 565:12 572:24 588:18 597:16 608:6 612:8 622:26 630:28 645-656:20 668:12 683:14 692:24 715-721:22 732-735:24 749:6 755:8 760:32 767:24 775:10 783:32 785-790:24 793-800:18 827:14 840-852:24 858:22 862:12 867-936:29d 938-958:24 959-994:28d 1008:4 1013-1028:25 1031:10 1035:16 1042-1068:26 1070-1085:22 1087-1098:26 1100-1130:24 1135-1142:16 1145-1171:26 1173-1205:22 1218-1228:24 1229-1253:32 1256:8 1264:12 1272-1290:22 1293-1298:26 1300-1320:24 1325:12 1334:10 1344:4 1349:18 1360-1365:16 1376-1404:27 1405-1411:10 1414-1425:26 1428:4 1438-1447:20 1451-1462:24 1464-1495:28 1497-1520:22 1522-1535:8 1543:34 1550:12 1554-1570:32 1573:10 1582-1641:31d 1643-1669:25 1675-1687:24 1690-1700:10 1706-1712:22 1717-1734:29 1741:4 1747:4 1752:10 1759-1766:24 1768-1776:18 1779-1794:20 1799-1817:28 1820-1829:22 1831-1853:30 1868:12 1874:34 1884:10 1898:34 1914:8 1927:12 1940:22 1967-1973:24 1978:8 1997:24 2013:2 2020:20 2028:2 2048-2058:26 2060-2068:22 2081:6 2092-2100:26 2102-2108:24 2120:2 2143:2 2153:10 2157:5 2172:14 2187:2 2213:26 2219:3 2223-2229:22 2232-2236:30 2241:16 2247-2257:27 2265:14 2278-2285:24 2288-2292:14 2293-2301:24 2333:4 2342:2 2352:18 2370:3 2377:8 2385-2396:27 2399-2404:22 2412:6 2416-2423:22 2425-2431:18 2434:28 2441:8 2446:2 2450:8 2458:5 2464:30',
3:'538-554:38 559:10 566:12 573:30 589:3 630:8 634-641:20 643-647:40 651:34 662:3 672:10 677-682:38 685-696:20 701-706:28 708-714:32 717-726:10 730-755:38 758-763:28 784:4 801:36 817:3 829:26 839:12 850-861:38 892:36 903:4 929:20 938:20 958:3 968:3 986:26 1033-1037:38 1042:16 1047:20 1057:3 1065:3 1073:10 1081-1085:30 1088-1108:30 1110-1122:36 1128:3 1136:3 1142-1149:38 1152-1158:32 1168-1200:40 1202-1228:34 1230-1253:40 1257:20 1264:4 1270:4 1276:3 1282:6 1288:3 1306:20 1355-1361:30 1363-1380:38 1410:3 1414:7 1428:16 1445:30 1450:8 1490:38 1496-1504:30 1508-1517:34 1524-1550:40 1552-1577:38 1592-1600:32 1609:10 1632-1650:38 1654:2 1672-1678:20 1680-1686:26 1697:3 1738-1746:34 1752:2 1760:3 1770-1776:26 1780-1790:18 1796:6 1800-1812:10 1816:5 1832-1838:24 1842-1850:38 1852-1860:38 1871-1878:34 1880:8 1898:42 1917:3 1923:8 1927-1930:32 1935-1943:38 1946-1956:16 1957-1968:34 1970:10 1999:16',
4:'2027-2032:26 2037:26 2046-2056:28 2060-2070:24 2071-2103:34d 2106:8 2117-2161:36d 2166-2218:34d 2222-2242:30 2246:2 2249-2257:28 2264-2294:36d 2295-2385:35d 2386-2406:36 2408-2435:34d 2437-2461:33d 2462-2474:33d'};
const wc = ['#5a2a34', '#213b4a', '#453719', '#31513a', '#323521'];
const cuts = {
1:[512,525,857,999,1213,1581,2009,2024,2410], 2:[526,857,999,1152,1213,1581,2009,2024,2410],
3:[526,538,695,701,726,728,861,892,905,954,986,999,1020,1024,1028,1033,1046,1133,1136,1148,1152,1213,1252,1257,1288,1293,1309,1345,1381,1408,1424,1427,1431,1442,1450,1492,1497,1515,1551,1581,1699,1812,1814,1966,1970,1997,2009],
4:[2024,2410]};
const ends = {1:2474, 2:2474, 3:2024, 4:2474};
const tri = {3:[526,538,701,728,861,905,954,999,1046,1152,1213,1252,1293,1309,1345,1381,1408,1450,1497,1515,1551,1581,1699,1812,1970,2009]};
function wave(i) {
  const x0 = cuts[i][0], x1 = ends[i], amp = new Float32Array(2500);
  for (const t of wav[i].split(' ')) {
    let [r, a] = t.split(':'), d = a.endsWith('d'); a = parseFloat(a);
    let [p, q] = r.split('-').map(Number); if (!q) { q = p + 1; p = p - 1; }
    let v = 1;
    for (let x = p; x <= q; x++) {
      const e = Math.min(1, (x - p + 1) / 3, (q - x + 1) / 3);
      if (q - p < 4) v = 1;
      else if (x % 2 || rnd() < .35) {
        const k = rnd();
        v = d ? .6 + .28 * k : (k < .25 ? .25 + k : .5 + .5 * k);
        if (rnd() < .13) v = d ? .9 + .25 * rnd() : 1.1;
      }
      amp[x] = Math.max(amp[x], a * v * e);
    }
  }
  const m = 61; let u = '', l = '';
  for (let x = x0; x < x1; x++) { u += `L${x - 508} ${(m - amp[x]).toFixed(1)}`; l = `L${x - 508} ${(m + amp[x] * (.86 + .2 * rnd())).toFixed(1)}` + l; }
  const c = cuts[i].map(x => [999, 1581, 2009].includes(x) ? `<path d="M${x - 510} 21H${x - 508}V101H${x - 510}z" fill="#111"/>` : `<path d="M${x - 508}.5 21V101" stroke="#111a"/>`).join('');
  const f = (tri[i] || cuts[i]).map(x => `<path d="M${x - 508} 93L${x - 501} 101H${x - 508}z" fill="#fff8"/>`).join('');
  return `<svg class="wave" width="${W}" height="103"><path d="M${x0 - 508} 22H${x1 - 508}V101H${x0 - 508}z" fill="${pal[i][0]}"/><path d="M${x0 - 508} 61.5H${x1 - 508}" stroke="${wc[i]}"/><path d="M${x0 - 508} 61${u}${l}z" fill="${wc[i]}"/>${c}${f}<path d="M${x0 - 508} 21.5H${x1 - 508}M${x0 - 508} 101.500H${x1 - 508}" stroke="#1c1c1c"/></svg>`;
}
const bump = `<svg class="wave" width="${W}" height="103"><path d="M1 21H18V101H1z" fill="#ff6f86" stroke="#222"/><path d="M4 57H15V68H4z" fill="#5a2a34"/><path d="M2 25L4 60V98L2 78z" fill="#5a2a34"/>` +
 [[490,2],[1071,4],[1500,1],[1515,1]].map(b => `<path d="M${b[0]} 21H${b[0] + b[1]}V101H${b[0]}z" fill="#ff6f86"/><path d="M${b[0]} 51H${b[0] + b[1]}V71H${b[0]}z" fill="#5a2a34"/>`).join('') + '<path d="M1499 37H1501V44H1499z" fill="#f2e20a"/></svg>';
const SB = 'Snow_Bros__Classic_Collection__Pragmata_...', SC = 'Snow_Bros__Classic_Collectio...', SP = 'Snow_Bros__Classic_Collection__Pr...';
const GI = 'GO_Interview___Antony_Johnston-';
const heads = {
1:[[538,'kmgif',SC],[869,'kmgif','S...'],[1012,'kmgif','Snow_Bros_...'],[1225,'kmgif',SP],[1594,'kmgif',SB],[2036,'kmgif',GI+'Scot...'],[2422,'kmg','']],
2:[[538,'kmgif',SC],[869,'kmgif','S...'],[1012,'kmgif','Sn...'],[1163,'km',''],[1225,'kmgif',SP],[1594,'kmgif',SB],[2036,'kmgif',GI+'Zac...'],[2422,'kmg','']],
3:[[551,'kmgif','Sno...'],[739,'kmgif',''],[917,'k',''],[1059,'kmg',''],[1170,'km',''],[1225,'k',''],[1267,'k',''],[1321,'K',''],[1357,'k',''],[1462,'K',''],[1527,'k',''],[1594,'kmgi',''],[1712,'kmgi',''],[1826,'kmgif','Sn...']],
4:[[2036,'kmgif',GI+'_An...'],[2422,'kmg','']]};
const hi = {k:'<i class="k"></i>', K:'<i class="k2"><svg width="20" height="20"><path d="M2 11L10 8" stroke="#a02020" stroke-width="2"/></svg></i>', m:'<i>M</i>', g:'<i class="g"><svg width="19" height="19"><use href="#chain"/></svg></i>', i:'<i class="i">i</i>', f:'<i>FX</i>'};
const flags = [[999,'NEWS','h'],[1581,'NEW GAME','h'],[1673,'PRAGMATA',''],[1853,'SNOW BROS','']];
let grid = '';
for (let k = 0; k * step < W; k++) grid += `M${Math.round(k * step) + .5} 0V900`;
$('lanes').innerHTML = names.slice(0, 8).map((n, i) => `<div class="lane ${i == 1 ? 'sel' : ''}">` +
 (i == 0 ? bump : i < 5 ? wave(i) : '') +
 (heads[i] || []).map(h => `<div class="clip" style="left:${h[0] - 509}px">${[...h[1]].map(c => hi[c]).join('')}${h[2] ? `<span>${h[2]}</span>` : ''}</div>`).join('') +
 (i == 1 ? flags.map(f => `<div class="flag ${f[2]}" style="left:${f[0] - 508}px">${f[1]}</div>`).join('') : '') + '</div>').join('') +
 `<svg class="gridlines" width="${W}" height="830"><path d="${grid}" stroke="#111" stroke-dasharray="1 1" shape-rendering="crispEdges"/></svg>`;

/* mixer */
const col = (a, c = '') => a.map(t => `<span class="${c}">${t}</span>`).join('');
$('s1').innerHTML = col(['12','6','0-','6-','12-','18-','24-','30-','36-','42-']);
$('s2').innerHTML = col(['-6-','-18-','-30-','-42-','-54-']);
$('s3').innerHTML = col(['12','6','-0','-6','-12','-18','-24','-30','-36','-42'], 'justify-content-end');
const fader = (n, y) => `<div class="cap" style="top:${y}px"></div><input type="range" aria-label="Volume ${n}">`;
$('mf').innerHTML = fader('MASTER', 34);
const capY = [9,3,0,11,2,3,3,3,3,0,3,3,3,3];
$('strips').innerHTML = names.map((n, i) => `
<div class="strip ${i == 1 ? 'sel' : ''} ${i == 6 ? 'wide' : ''} ${i > 4 ? 'gray' : ''}" style="${vars(i)}">
 <div class="stop"><div class="sin px-2">
  <div class="pick"><select aria-label="Input of track ${i + 1}"><option>Input 1</option></select><svg width="25" height="25"><use href="#dd"/></svg></div>
  <div class="d-flex justify-content-between monrow"><div class="pick mon"><select aria-label="Monitor mode of track ${i + 1}"><option>in</option></select><svg width="25" height="25"><use href="#dd"/></svg></div>
   <button class="infx" aria-label="Input FX"><b>IN<br>FX</b></button></div>
  <div class="d-flex justify-content-center panrow"><button class="knob" aria-label="Pan of track ${i + 1}"></button></div>
 </div></div>
 <div class="slow"><div class="sin d-flex">
  <div class="cola"><div class="sc">-inf</div><svg width="12" height="20"><use href="#spk"/></svg></div>
  <div class="colb"><div class="fader">${fader(n, capY[i])}</div><button class="arm" aria-label="Record arm"></button></div>
  <div class="colc"><button class="btn ms d-block">M</button><button class="btn ms s d-block">S</button>
   <button class="btn sq rt mt-2" aria-label="Routing"><svg width="27" height="27"><path d="M0 27V15L4 0H11L4 27z" fill="#1cc59d"/><path d="M6 27L13 0H18L11 27z" fill="#5a5530"/><path d="M14 27L21 0H27V10L22 27z" fill="#2f4a5c"/></svg></button>
   <button class="btn sq" aria-label="Envelopes"><svg width="20" height="14"><use href="#env"/></svg></button></div>
 </div></div>
 <div class="nm">${i == 5 ? 'SCOTT REVIEW' : n}</div><div class="no">${i + 1}</div>
</div>`).join('');
</script>
</body>
</html>
